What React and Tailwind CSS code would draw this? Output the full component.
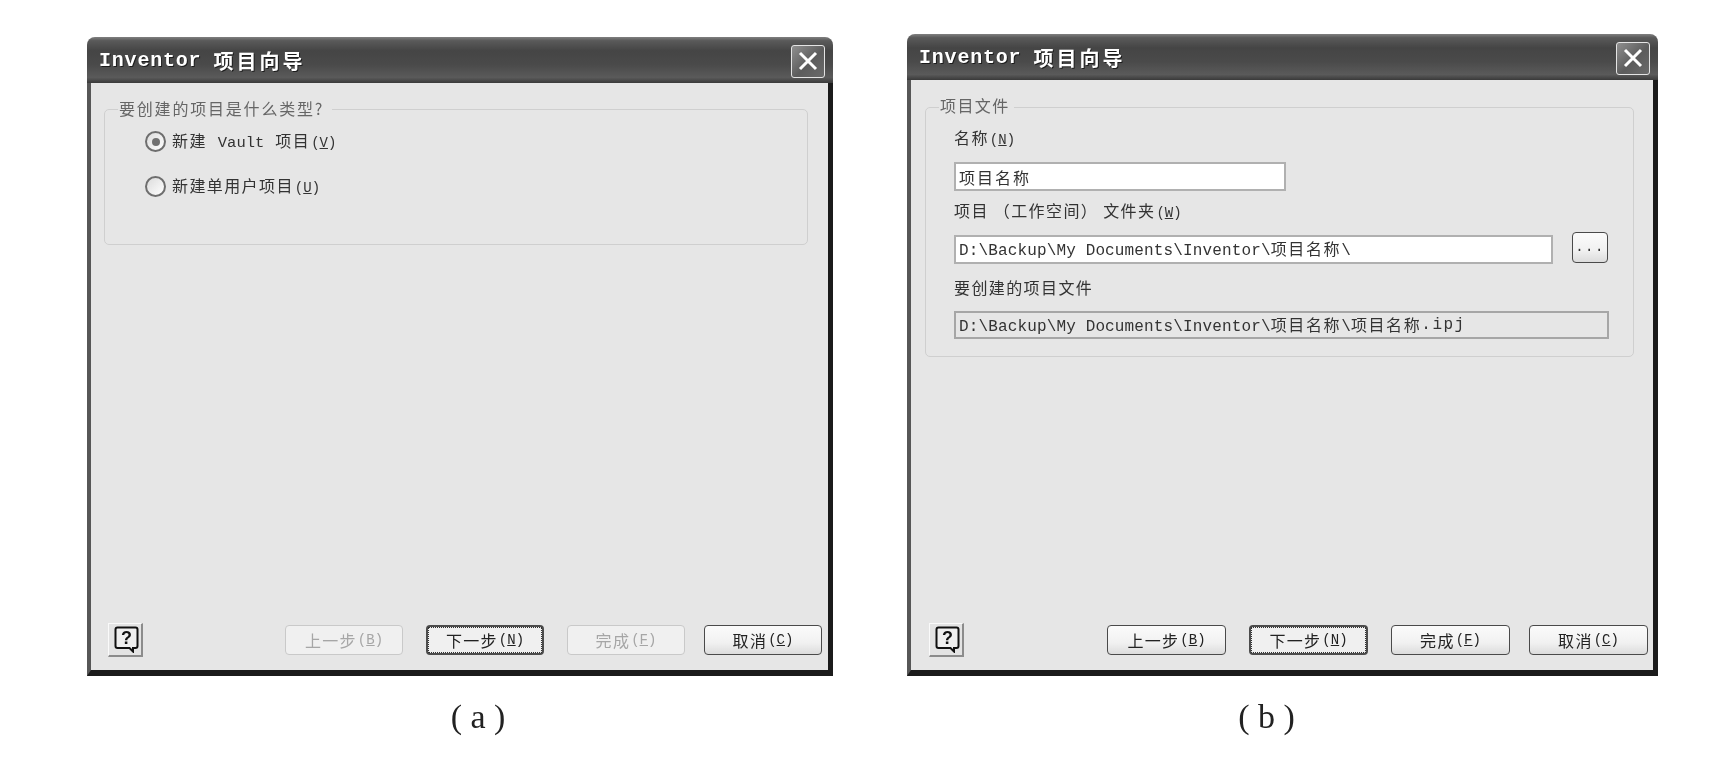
import React from "react";

const mono = "font-['Liberation_Mono','Noto_Sans_CJK_SC',monospace]";
const cjk = "font-['Noto_Sans_CJK_SC','Liberation_Sans',sans-serif]";

const Han = ({ children }) => <span className={`${cjk} tracking-[1.6px]`}>{children}</span>;

const Key = ({ k }) => (
  <span className={`ml-[1px] ${mono} text-[14px] tracking-normal`}>
    (<span className="underline">{k}</span>)
  </span>
);

const TitleBar = () => (
  <div className="flex h-[46px] shrink-0 items-center justify-between rounded-t-[8px] bg-[linear-gradient(#808080_0,#5a5a5a_8%,#454545_30%,#4a4a4a_60%,#5a5a5a_88%,#3a3a3a_100%)] pt-[2px] pl-[12px] pr-[8px]">
    <div className="flex items-center gap-[12px] text-white [text-shadow:1px_1px_0_#1c1c1c]">
      <span className="font-['Liberation_Mono',monospace] text-[20px] font-bold tracking-[0.8px]">Inventor</span>
      <span className={`${cjk} text-[20px] font-bold tracking-[3px]`}>项目向导</span>
    </div>
    <button className="flex h-[33px] w-[34px] items-center justify-center rounded-[3px] border border-[#e4e4e4] bg-[linear-gradient(135deg,#8f8f8f,#5c5c5c_55%,#6a6a6a)]">
      <svg width="20" height="20" viewBox="0 0 20 20">
        <path d="M2 2 L18 18 M18 2 L2 18" stroke="#fff" strokeWidth="3" />
      </svg>
    </button>
  </div>
);

const HelpButton = () => (
  <button className="flex h-[34px] w-[35px] items-center justify-center border-t border-l border-t-[#fafafa] border-l-[#fafafa] border-r-2 border-b-2 border-r-[#8c8c8c] border-b-[#8c8c8c] bg-[#e4e4e4] pl-[3px]">
    <svg width="25" height="27" viewBox="0 0 25 27">
      <path
        d="M3.5 1.5 H21.5 Q23.5 1.5 23.5 3.5 V20 Q23.5 22 21.5 22 H19 V25.5 L15.5 22 H3.5 Q1.5 22 1.5 20 V3.5 Q1.5 1.5 3.5 1.5 Z"
        fill="#efefef"
        stroke="#111"
        strokeWidth="2"
      />
      <text x="12.5" y="18" textAnchor="middle" fontFamily="Liberation Sans" fontWeight="700" fontSize="18" fill="#111">
        ?
      </text>
    </svg>
  </button>
);

const WizardButton = ({ label, k, disabled, primary, wide }) => {
  const base = `flex h-[30px] ${wide ? "w-[119px]" : "w-[118px]"} items-center justify-center rounded-[4px] ${cjk} text-[16px] tracking-[1.3px]`;
  if (disabled) {
    return (
      <button className={`${base} border border-[#c9c9c9] bg-[#f0f0f0] text-[#a6a6a6]`}>
        {label}
        <Key k={k} />
      </button>
    );
  }
  if (primary) {
    return (
      <button className={`${base} border-2 border-[#4c4c4c] bg-[#f0f0f0] text-[#222]`}>
        <span className="flex h-full w-full items-center justify-center border border-dotted border-[#333]">
          {label}
          <Key k={k} />
        </span>
      </button>
    );
  }
  return (
    <button className={`${base} border border-[#4a4a4a] bg-[linear-gradient(#fbfbfb,#f1f1f1_60%,#dcdcdc)] text-[#222]`}>
      {label}
      <Key k={k} />
    </button>
  );
};

const Radio = ({ checked, label, k, className }) => (
  <div className={`flex h-[21px] items-center gap-[6px] ${className}`}>
    <span className="flex h-[21px] w-[21px] items-center justify-center rounded-full border-2 border-[#6e6e6e] bg-linear-to-br from-[#dcdcdc] to-white">
      {checked && <span className="h-[8px] w-[8px] rounded-full bg-[#707070]" />}
    </span>
    <span className="flex items-baseline text-[16px] leading-[21px] text-[#333]">
      {label}
      <Key k={k} />
    </span>
  </div>
);

const DialogA = () => (
  <div className="flex w-[746px] flex-col">
    <div className="flex h-[639px] flex-col rounded-t-[8px] bg-[#e6e6e6]">
      <TitleBar />
      <div className="flex flex-1 flex-col justify-between border-l-4 border-r-[5px] border-b-[6px] border-l-[#575757] border-r-[#1b1b1b] border-b-[#1b1b1b]">
        <fieldset className={`mt-[16px] ml-[13px] mr-[20px] h-[146px] rounded-[5px] border border-[#cfcfcf] ${cjk} tracking-[1.4px]`}>
          <legend className="ml-[13px] h-[20px] px-[1px] pr-[8px] text-[16px] leading-[19px] tracking-[1.8px] text-[#666]">
            要创建的项目是什么类型?
          </legend>
          <Radio
            checked
            className="mt-[12px] ml-[40px]"
            k="V"
            label={
              <>
                新建
                <span className={`mx-[11px] ${mono} text-[15.5px] tracking-normal`}>Vault</span>
                项目
              </>
            }
          />
          <Radio className="mt-[24px] ml-[40px]" label="新建单用户项目" k="U" />
        </fieldset>
        <div className="flex items-center pb-[13px] pl-[17px] pr-[6px]">
          <HelpButton />
          <div className="ml-auto flex items-center gap-[23px]">
            <WizardButton disabled label="上一步" k="B" />
            <WizardButton primary label="下一步" k="N" />
            <div className="flex items-center gap-[19px]">
              <WizardButton disabled label="完成" k="F" />
              <WizardButton label="取消" k="C" />
            </div>
          </div>
        </div>
      </div>
    </div>
    <p className="mt-[21px] pl-[36px] text-center font-['Liberation_Serif',serif] text-[34px] leading-[40px] text-[#222]">( a )</p>
  </div>
);

const Path = ({ tail }) => (
  <span className={`${mono} text-[16px] leading-[20px] tracking-[0.14px] text-[#333]`}>
    D:\Backup\My Documents\Inventor\<Han>项目名称</Han>\{tail}
  </span>
);

const FieldLabel = ({ className, children }) => (
  <div className={`h-[20px] text-[16px] leading-[16px] text-[#333] ${className}`}>{children}</div>
);

const DialogB = () => (
  <div className="flex w-[751px] flex-col">
    <div className="flex h-[642px] flex-col rounded-t-[8px] bg-[#e6e6e6]">
      <TitleBar />
      <div className="flex flex-1 flex-col justify-between border-l-4 border-r-[5px] border-b-[6px] border-l-[#575757] border-r-[#1b1b1b] border-b-[#1b1b1b]">
        <fieldset className={`mt-[17px] ml-[14px] mr-[19px] h-[260px] rounded-[5px] border border-[#cfcfcf] pl-[28px] ${cjk} tracking-[1.4px]`}>
          <legend className="ml-[-15px] h-[20px] px-[1px] pr-[4px] text-[16px] leading-[17px] text-[#666]">项目文件</legend>
          <FieldLabel className="mt-[12px]">
            名称<Key k="N" />
          </FieldLabel>
          <div className="mt-[13px] flex h-[29px] w-[332px] items-center border-2 border-[#b0b0b0] bg-white pl-[3px] text-[16px] leading-[20px] tracking-[2px] text-[#333]">
            项目名称
          </div>
          <FieldLabel className="mt-[11px]">
            项目 （工作空间） 文件夹<Key k="W" />
          </FieldLabel>
          <div className="mt-[10px] flex h-[32px] w-[654px] justify-between">
            <div className="flex h-[29px] w-[599px] items-center self-end border-2 border-[#b0b0b0] bg-white pl-[3px]">
              <Path />
            </div>
            <button className={`h-[31px] w-[36px] rounded-[4px] border border-[#4a4a4a] bg-[linear-gradient(#fbfbfb,#f1f1f1_60%,#dcdcdc)] ${mono} text-[14px] text-[#333]`}>
              ...
            </button>
          </div>
          <FieldLabel className="mt-[15px]">要创建的项目文件</FieldLabel>
          <div className="mt-[12px] flex h-[28px] w-[655px] items-center border-2 border-[#a6a6a6] pl-[3px]">
            <Path tail={<Han>项目名称</Han>} />
            <span className={`${mono} text-[16px] tracking-[1.5px] text-[#333]`}>.ipj</span>
          </div>
        </fieldset>
        <div className="flex items-center pb-[13px] pl-[18px] pr-[5px]">
          <HelpButton />
          <div className="ml-auto flex items-center gap-[23px]">
            <WizardButton wide label="上一步" k="B" />
            <WizardButton wide primary label="下一步" k="N" />
            <div className="flex items-center gap-[19px]">
              <WizardButton wide label="完成" k="F" />
              <WizardButton wide label="取消" k="C" />
            </div>
          </div>
        </div>
      </div>
    </div>
    <p className="mt-[21px] pr-[32px] text-center font-['Liberation_Serif',serif] text-[34px] leading-[40px] text-[#222]">( b )</p>
  </div>
);

export default function App() {
  return (
    <div className="flex min-h-screen items-end gap-[74px] bg-white pt-[34px] pl-[87px] pb-[23px] blur-[0.4px]">
      <DialogA />
      <DialogB />
    </div>
  );
}
